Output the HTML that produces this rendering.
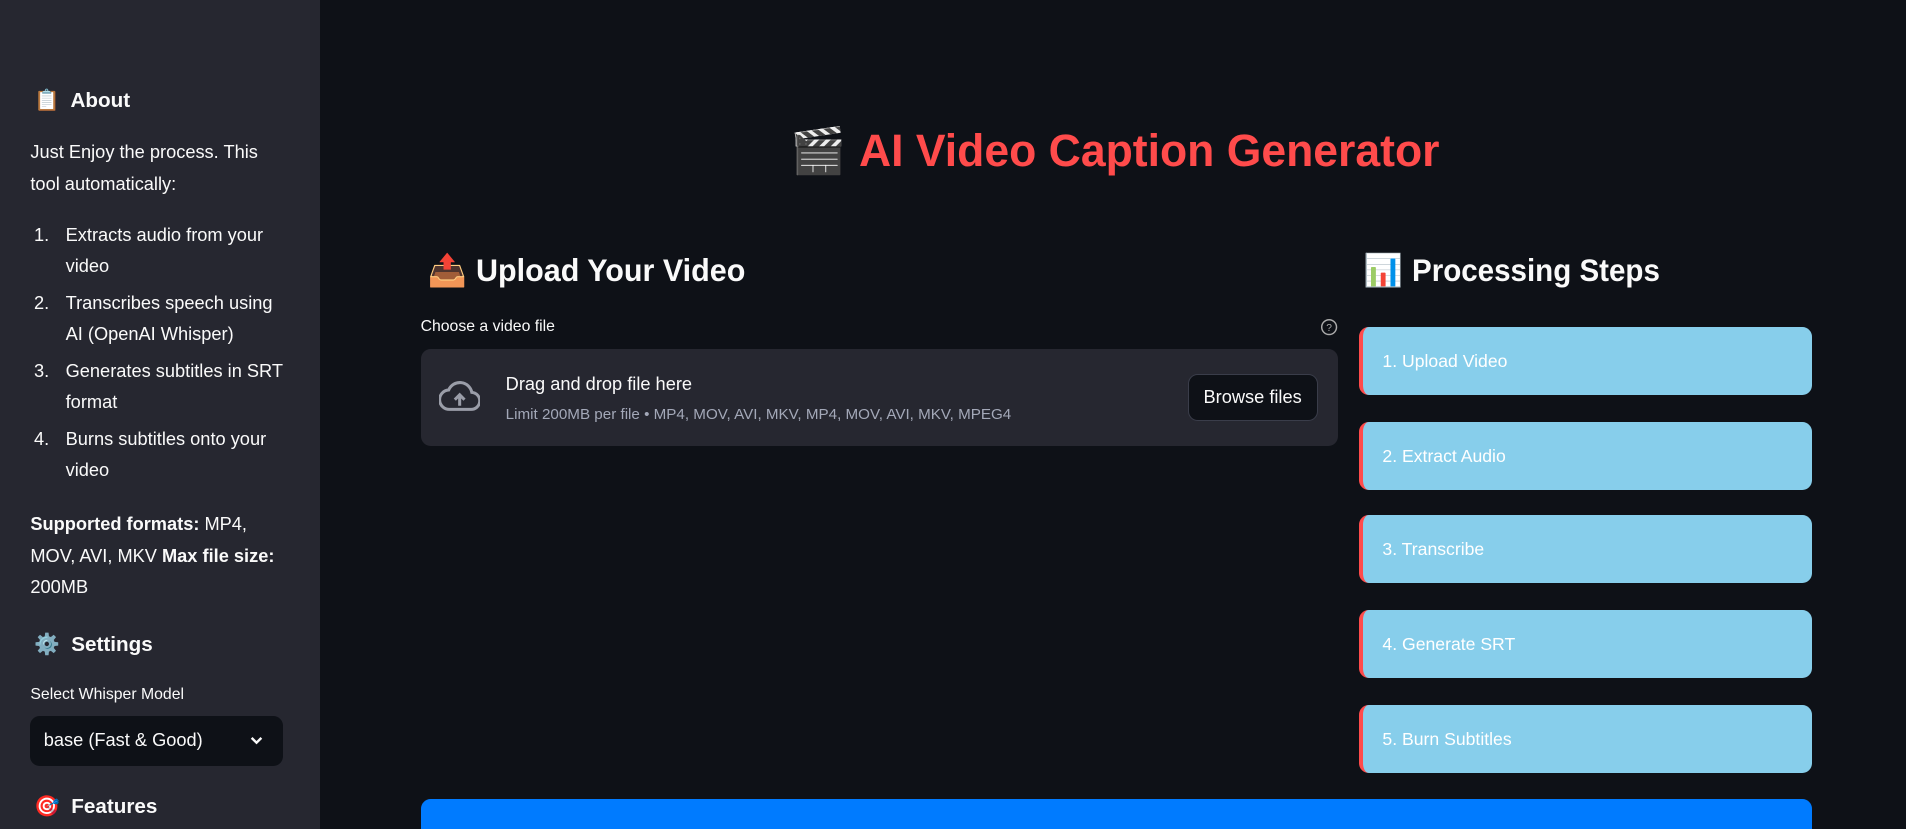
<!DOCTYPE html>
<html><head><meta charset="utf-8"><style>
html,body{margin:0;padding:0;background:#0e1117;overflow:hidden;width:1906px;height:829px}
#w{zoom:1.21556;position:relative;width:1568px;height:682px;font-family:"Liberation Sans","Noto Sans CJK JP",sans-serif;color:#fafafa;overflow:hidden}
.a{position:absolute;white-space:nowrap}
#sb{position:absolute;left:0;top:0;width:263px;height:682px;background:#262730}
.h{font-weight:bold;font-size:17px}
.p{font-size:15px}
.st{position:absolute;left:1118px;width:373px;height:56px;background:#87ceeb;border-radius:8px;border-left:4px solid #ff4b4b;box-sizing:border-box;color:#fff;font-size:14.5px;line-height:56px;padding-left:16px}
</style></head><body><div id="w">
<div id="sb">
<div class="a h" style="left:28px;top:73px">📋&nbsp; About</div>
<div class="a p" style="left:25px;top:116px">Just Enjoy the process. This</div>
<div class="a p" style="left:25px;top:142px">tool automatically:</div>
<div class="a p" style="left:28px;top:184px">1.</div><div class="a p" style="left:54px;top:184px">Extracts audio from your</div><div class="a p" style="left:54px;top:210px">video</div>
<div class="a p" style="left:28px;top:240px">2.</div><div class="a p" style="left:54px;top:240px">Transcribes speech using</div><div class="a p" style="left:54px;top:266px">AI (OpenAI Whisper)</div>
<div class="a p" style="left:28px;top:296px">3.</div><div class="a p" style="left:54px;top:296px">Generates subtitles in SRT</div><div class="a p" style="left:54px;top:322px">format</div>
<div class="a p" style="left:28px;top:352px">4.</div><div class="a p" style="left:54px;top:352px">Burns subtitles onto your</div><div class="a p" style="left:54px;top:378px">video</div>
<div class="a p" style="left:25px;top:422px"><b>Supported formats:</b> MP4,</div>
<div class="a p" style="left:25px;top:448px">MOV, AVI, MKV <b>Max file size:</b></div>
<div class="a p" style="left:25px;top:474px">200MB</div>
<div class="a h" style="left:28px;top:521px">⚙️&nbsp; Settings</div>
<div class="a" style="left:25px;top:564px;font-size:13px">Select Whisper Model</div>
<div class="a" style="left:25px;top:589px;width:208px;height:41px;background:#0e1117;border-radius:8px"></div>
<div class="a p" style="left:36px;top:600px">base (Fast &amp; Good)</div>
<svg class="a" style="left:204px;top:603px" width="14" height="12" viewBox="0 0 14 12"><path d="M3 4l4 4 4-4" stroke="#fafafa" stroke-width="2" fill="none"/></svg>
<div class="a h" style="left:28px;top:654px">🎯&nbsp; Features</div>
</div>
<div class="a" style="left:650px;top:102px;font-size:37px;font-weight:bold;color:#ff4b4b">🎬 <span style="display:inline-block;transform:scaleX(0.99);transform-origin:left">AI Video Caption Generator</span></div>
<div class="a" style="left:352px;top:207px;font-size:26px;font-weight:bold">📤 <span style="display:inline-block;transform:scaleX(0.965);transform-origin:left">Upload Your Video</span></div>
<div class="a" style="left:1122px;top:207px;font-size:26px;font-weight:bold">📊 <span style="display:inline-block;transform:scaleX(0.935);transform-origin:left">Processing Steps</span></div>
<div class="a" style="left:346px;top:262px;font-size:13px">Choose a video file</div>
<svg class="a" style="left:1086px;top:262px" width="15" height="15" viewBox="0 0 16 16"><circle cx="8" cy="8" r="6.5" stroke="#aaa" fill="none" stroke-width="1.3"/><text x="8" y="11.5" font-size="9" text-anchor="middle" fill="#aaa" font-family="Liberation Sans">?</text></svg>
<div class="a" style="left:346px;top:287px;width:755px;height:80px;background:#262730;border-radius:8px"></div>
<svg class="a" style="left:361px;top:312px" width="34" height="30" viewBox="0 0 34 30"><path d="M9 25h17a7 7 0 0 0 1-14 10 10 0 0 0-19-2 8 8 0 0 0 1 16z" stroke="#9a9da8" stroke-width="2.5" fill="none"/><path d="M17 22v-9M13 17l4-4 4 4" stroke="#9a9da8" stroke-width="2.5" fill="none"/></svg>
<div class="a" style="left:416px;top:307px;font-size:15px">Drag and drop file here</div>
<div class="a" style="left:416px;top:334px;font-size:12.5px;color:#a3a8b8">Limit 200MB per file • MP4, MOV, AVI, MKV, MP4, MOV, AVI, MKV, MPEG4</div>
<div class="a" style="left:977px;top:308px;width:107px;height:38px;box-sizing:border-box;background:#0e1117;border:1px solid #3a3d4a;border-radius:8px;font-size:15px;line-height:36px;text-align:center">Browse files</div>
<div class="st" style="top:269px">1. Upload Video</div>
<div class="st" style="top:347px">2. Extract Audio</div>
<div class="st" style="top:424px">3. Transcribe</div>
<div class="st" style="top:502px">4. Generate SRT</div>
<div class="st" style="top:580px">5. Burn Subtitles</div>
<div class="a" style="left:346px;top:657px;width:1145px;height:25px;background:#007bff;border-radius:8px 8px 0 0"></div>
</div></body></html>
